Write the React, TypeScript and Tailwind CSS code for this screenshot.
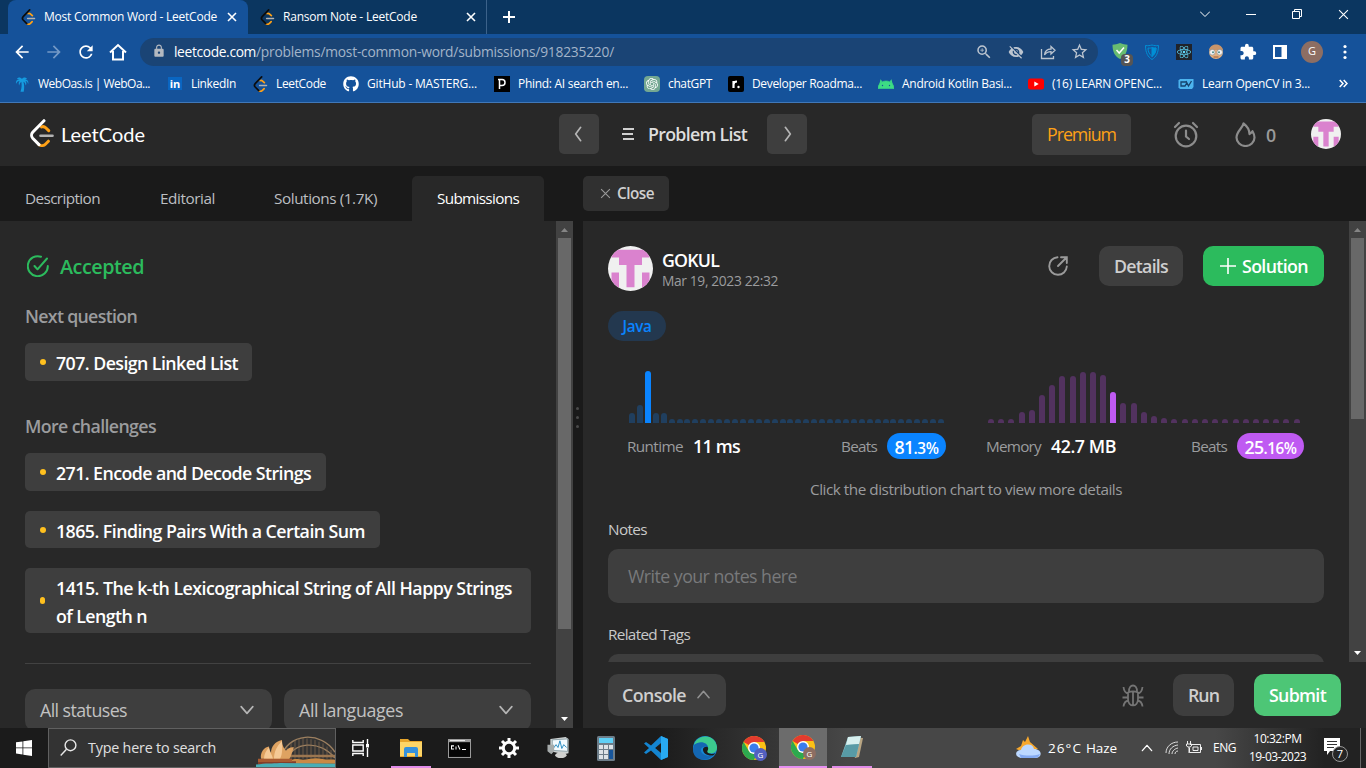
import { useLayoutEffect, useRef, useState } from "react";
import type { ReactNode } from "react";
import { FaGithub, FaReact } from "react-icons/fa";
import { SiOpenai } from "react-icons/si";
import { MdExtension, MdVisibilityOff, MdZoomIn, MdLock, MdArrowBack, MdArrowForward, MdRefresh, MdStarBorder } from "react-icons/md";

/* Text that spaces its letters to fill a given width. */
function Fit({ w, c = "", children }: { w: number; c?: string; children: string }) {
  const ref = useRef<HTMLSpanElement>(null);
  const [spacing, setSpacing] = useState(0);
  useLayoutEffect(() => {
    const el = ref.current;
    if (el) setSpacing((w - el.getBoundingClientRect().width) / children.length);
  }, [w, children]);
  return (
    <span className={`block shrink-0 whitespace-nowrap ${c}`} style={{ width: w }}>
      <span ref={ref} className="inline-block" style={{ letterSpacing: spacing }}>{children}</span>
    </span>
  );
}

function LeetLogo({ dark = false, c }: { dark?: boolean; c: string }) {
  return (
    <svg className={c} viewBox="0 0 24 28" fill="none" strokeLinecap="round" strokeWidth="3">
      <path d="M9 25.6c2 1.500 4.800 1.200 6.400-.4l3-3M11.500 8c1.800-.8 3.200-.2 4.200.8l3 2.900" stroke="#ffa116" />
      <path d="M10.500 16.700h12" stroke="#b3b3b3" strokeWidth="2.600" />
      <path d="M14 1.700 2.700 13.300c-1.500 1.700-1.500 4.400 0 6L9 25.600" stroke={dark ? "#0c0c0c" : "#fff"} />
    </svg>
  );
}

function Avatar({ c }: { c: string }) {
  return (
    <svg className={`rounded-full shrink-0 ${c}`} viewBox="0 0 45 45">
      <rect width="45" height="45" fill="#f0f0f0" />
      <path d="M3.500 3.800h38v7.700H34v7.500h-7.500v22.300h-8V19H11v-7.500H3.500zM3.500 26.500H11v15H3.500zM34 26.500h7.500v15H34z" fill="#da82ce" />
    </svg>
  );
}

function Chevron({ dir, c }: { dir: "left" | "right" | "up" | "down"; c: string }) {
  const d = { left: "M14 4 8 12l6 8", right: "M10 4l6 8-6 8", up: "M5 16l7-8 7 8", down: "M5 8l7 8 7-8" }[dir];
  return <svg className={`shrink-0 ${c}`} viewBox="0 0 24 24" fill="none" stroke="currentColor" strokeWidth="2" strokeLinecap="round" strokeLinejoin="round"><path d={d} /></svg>;
}

const Cross = ({ c }: { c: string }) => (
  <svg className={`shrink-0 ${c}`} viewBox="0 0 10 10" stroke="currentColor" fill="none"><path d="M1 1l8 8M9 1 1 9" /></svg>
);

function BrowserTabs() {
  return (
    <div className="flex h-[34px] bg-[#0b3660] pl-2">
      <div className="flex w-[240px] items-center rounded-t-lg bg-[#15529a] pl-3 text-[12px] text-white">
        <LeetLogo dark c="ml-px h-4 w-[15px] shrink-0" />
        <Fit w={173} c="ml-2">Most Common Word - LeetCode</Fit>
        <Cross c="ml-[10px] h-[10px] w-[10px] stroke-[1.600]" />
      </div>
      <div className="flex w-[239px] items-center border-r border-[#3c628a] pl-[11px] text-[12px] text-white">
        <LeetLogo dark c="ml-px h-4 w-[15px] shrink-0" />
        <Fit w={134} c="ml-2">Ransom Note - LeetCode</Fit>
        <Cross c="ml-[49px] h-[10px] w-[10px] stroke-[1.600]" />
      </div>
      <svg className="ml-[15px] mt-[10px] h-[14px] w-[14px]" viewBox="0 0 14 14" stroke="#fff" strokeWidth="2"><path d="M1 7h12M7 1v12" /></svg>
      <div className="ml-auto flex h-7 items-center gap-9 pr-[17px] text-white">
        <svg className="h-[10px] w-[10px]" viewBox="0 0 10 10" fill="none" stroke="currentColor"><path d="M0 2.500l5 5 5-5" /></svg>
        <svg className="h-[10px] w-[10px]" viewBox="0 0 10 10" fill="none" stroke="currentColor"><path d="M0 5.500h10" /></svg>
        <svg className="h-[10px] w-[10px]" viewBox="0 0 10 10" fill="none" stroke="currentColor"><path d="M.5 2.500h7v7h-7zM2.500 2.500v-2h7v7h-2" /></svg>
        <Cross c="h-[11px] w-[11px]" />
      </div>
    </div>
  );
}

function Toolbar() {
  return (
    <div className="flex h-[35px] items-center bg-[#15529a] text-white">
      <MdArrowBack className="ml-3 h-5 w-5" />
      <MdArrowForward className="ml-3 h-5 w-5 text-[#7499c6]" />
      <MdRefresh className="ml-3 h-5 w-5" />
      <svg className="ml-3 h-5 w-5" viewBox="0 0 20 20" fill="none" stroke="currentColor" strokeWidth="2"><path d="M2 10.500 10 3l8 7.500M5 9v8.500h10V9" /></svg>
      <div className="ml-3 flex h-7 w-[958px] items-center rounded-full bg-[#1a4475] pl-3 text-[13.800px]">
        <MdLock className="h-[14px] w-[14px] -translate-y-px text-[#b4b9c0]" />
        <Fit w={82} c="ml-2 pt-px">leetcode.com</Fit>
        <Fit w={358} c="pt-px text-[#a3b4c9]">/problems/most-common-word/submissions/918235220/</Fit>
        <MdZoomIn className="ml-[361px] h-[18px] w-[18px] text-[#bcc5d0]" />
        <MdVisibilityOff className="ml-[15px] h-4 w-4 text-[#bcc5d0]" />
        <svg className="ml-4 h-4 w-4 text-[#bcc5d0]" viewBox="0 0 16 16" fill="none" stroke="currentColor" strokeWidth="1.300"><path d="M1.500 5v9.500h12V12M4.500 11c.5-4 3-6 6.500-6V2.500L15 6.300 11 10V7.700c-3 0-5 1-6.500 3.300z" /></svg>
        <MdStarBorder className="ml-[14px] h-[19px] w-[19px] text-[#bcc5d0]" />
      </div>
      <div className="relative ml-[14px] h-[18px] w-[18px]">
        <svg className="h-4 w-4" viewBox="0 0 16 16"><path d="M8 0c3 1.200 5 1.500 7.500 1.700C15.500 9 13 13.500 8 16 3 13.500.5 9 .5 1.700 3 1.500 5 1.200 8 0z" fill="#68bc71" /><path d="M4.500 7l2.700 3L12 4.500" fill="none" stroke="#fff" strokeWidth="1.500" /></svg>
        <span className="absolute left-[9px] top-[11px] flex h-[12px] w-[12px] items-center justify-center rounded-sm bg-[#555] text-[10px] font-bold">3</span>
      </div>
      <svg className="ml-[14px] h-4 w-4" viewBox="0 0 16 16" fill="none" stroke="#008fd6"><path d="M1.500 1.500C4 2 6 1.500 8 1c2 .5 4 1 6.500.5C14.500 9 12 13 8 15.500 4 13 1.500 9 1.500 1.500z" /><path d="M4 4c2 .3 3 0 4-.4 1 .4 2 .7 4 .4 0 4-1.500 6.500-4 8.500-2.500-2-4-4.500-4-8.500z" /><path d="M8 3.600v8.900c2.500-2 4-4.500 4-8.500-2 .3-3 0-4-.4z" fill="#008fd6" /></svg>
      <span className="ml-4 flex h-4 w-4 items-center justify-center bg-[#20232a]"><FaReact className="h-[14px] w-[14px] text-[#61dafb]" /></span>
      <svg className="ml-4 h-4 w-4" viewBox="0 0 16 16"><circle cx="8" cy="8" r="7" fill="#e3b07f" /><path d="M1 6C2 2 5 .5 8 .500S14 2 15 6z" fill="#c8956b" /><circle cx="4.300" cy="8.200" r="2.800" fill="#f2f2f2" stroke="#888" strokeWidth=".6" /><circle cx="11.700" cy="8.200" r="2.800" fill="#f2f2f2" stroke="#888" strokeWidth=".6" /><circle cx="5" cy="8.200" r="1" fill="#4a8e8b" /><circle cx="11" cy="8.200" r="1" fill="#4a8e8b" /><path d="M5.500 13h5" stroke="#9c5c3c" /></svg>
      <MdExtension className="ml-[15px] h-[18px] w-[18px]" />
      <svg className="ml-[16px] h-[14px] w-[14px]" viewBox="0 0 14 14"><path d="M0 0h14v14H0zM2 2v10h6.500V2z" fill="#fff" fillRule="evenodd" /></svg>
      <span className="ml-[14px] flex h-[22px] w-[22px] items-center justify-center rounded-full bg-[#8d6e63] text-[11px]">G</span>
      <svg className="ml-5 h-4 w-1" viewBox="0 0 4 16" fill="#fff"><circle cx="2" cy="2.500" r="1.600" /><circle cx="2" cy="8" r="1.600" /><circle cx="2" cy="13.500" r="1.600" /></svg>
    </div>
  );
}

function Bookmark({ cell, w, icon, children }: { cell: string; w: number; icon: ReactNode; children: string }) {
  return (
    <div className={`flex shrink-0 items-center gap-2 ${cell}`}>
      <span className="flex h-4 w-4 shrink-0 items-center justify-center">{icon}</span>
      <Fit w={w}>{children}</Fit>
    </div>
  );
}

function Bookmarks() {
  return (
    <div className="flex h-[34px] items-center border-b border-[#4178b8] bg-[#15529a] pb-1 pl-[14px] text-[12px] text-white">
      <Bookmark cell="w-[153px]" w={112} icon={<svg className="h-4 w-4" viewBox="0 0 16 16"><path d="M8 3c-1.500-2-4-2-5 0 1-.3 2 0 2.500.5C3 3 1.500 5 2 8c.8-2 2-3 3.500-3-1 1.500-1 3-.2 4.500.2-2 1-3 2-3.800.6 3 .5 6-.8 10h3.200c.8-4 .6-7-.3-10 1.300.6 2 1.800 2.300 3.800 1-1.500.8-3-.2-4.500 1.500 0 2 1 2.700 3C15 5 13 3.500 11 3.600c.5-.6 1.300-.8 2-.6-1-2-4-2-5 0z" fill="#159be0" /></svg>}>WebOas.is | WebOa...</Bookmark>
      <Bookmark cell="w-[85px]" w={45} icon={<span className="flex h-[13px] w-[14px] items-center justify-center bg-[#0a66c2] text-[11px] font-bold leading-none">in</span>}>LinkedIn</Bookmark>
      <Bookmark cell="w-[91px]" w={50} icon={<LeetLogo dark c="h-4 w-[15px]" />}>LeetCode</Bookmark>
      <Bookmark cell="w-[151px]" w={110} icon={<FaGithub className="h-4 w-4" />}>GitHub - MASTERG...</Bookmark>
      <Bookmark cell="w-[150px]" w={110} icon={<span className="flex h-4 w-4 items-center justify-center bg-black"><svg className="h-3 w-2" viewBox="0 0 8 12" fill="none" stroke="#fff" strokeWidth="1.500"><path d="M0 1.500h4a2.800 2.800 0 0 1 0 6H1.500V1.500V11" /></svg></span>}>Phind: AI search en...</Bookmark>
      <Bookmark cell="w-[84px]" w={44} icon={<span className="flex h-4 w-4 items-center justify-center rounded-sm bg-[#74a892]"><SiOpenai className="h-3 w-3" /></span>}>chatGPT</Bookmark>
      <Bookmark cell="w-[150px]" w={110} icon={<span className="flex h-4 w-4 items-center justify-center rounded-xs bg-black"><svg className="h-[10px] w-[10px]" viewBox="0 0 10 10"><path d="M2.500 9V2M2.500 5.500C2.500 3.500 4 2.500 6 2.500" stroke="#fff" strokeWidth="2.200" fill="none" /><circle cx="7.500" cy="8" r="1.200" fill="#fff" /></svg></span>}>Developer Roadma...</Bookmark>
      <Bookmark cell="w-[150px]" w={110} icon={<svg className="h-4 w-4" viewBox="0 0 16 16"><path d="M0 12.500C.3 9.500 1.800 7.200 4 5.800L2.600 3.600M16 12.500C15.700 9.500 14.200 7.200 12 5.800l1.400-2.200M0 12.500C.3 8 4 5 8 5s7.700 3 8 7.500z" fill="#3ddc84" stroke="#3ddc84" strokeWidth=".6" /><circle cx="4.500" cy="9.500" r=".7" fill="#15529a" /><circle cx="11.500" cy="9.500" r=".7" fill="#15529a" /></svg>}>Android Kotlin Basi...</Bookmark>
      <Bookmark cell="w-[150px]" w={110} icon={<svg className="h-4 w-4" viewBox="0 0 16 16"><rect y="2.500" width="16" height="11" rx="2.500" fill="red" /><path d="M6.300 5.500v5L10.700 8z" fill="#fff" /></svg>}>(16) LEARN OPENC...</Bookmark>
      <Bookmark cell="w-[161px]" w={108} icon={<svg className="h-4 w-4" viewBox="0 0 16 16"><path d="M2 3h13.500v8L14 13H2L.500 11.500v-7z" fill="#4db4ee" /><path d="M8 6H3v4h4l2-3.500M8 5l2.500 5L13.500 5" fill="none" stroke="#15436f" strokeWidth="1.300" /></svg>}>Learn OpenCV in 3...</Bookmark>
      <svg className="h-[9px] w-[9px]" viewBox="0 0 9 9" fill="none" stroke="#fff" strokeWidth="1.500"><path d="M.7 1l3.300 3.500L.7 8M4.700 1 8 4.500 4.700 8" /></svg>
    </div>
  );
}

function SiteHeader() {
  return (
    <header className="flex h-[63px] items-center bg-[#282828] pb-px text-[#e0e0e0]">
      <LeetLogo c="ml-[30px] h-7 w-6 -translate-y-px" />
      <Fit w={84} c="mb-px ml-[7px] font-['Lato'] text-[20px] text-white">LeetCode</Fit>
      <span className="ml-[414px] flex h-10 w-10 items-center justify-center rounded-[5px] bg-[#3e3e3e]"><Chevron dir="left" c="h-5 w-5 text-[#b5b5b5]" /></span>
      <svg className="ml-[23px] h-3 w-3" viewBox="0 0 12 12" stroke="#d0d0d0" strokeWidth="2"><path d="M1 1h11M0 6h11M1 11h11" /></svg>
      <Fit w={99} c="ml-[14px] pt-px text-[17.800px] font-semibold text-[#dedede]">Problem List</Fit>
      <span className="ml-[20px] flex h-10 w-10 items-center justify-center rounded-[5px] bg-[#3e3e3e]"><Chevron dir="right" c="h-5 w-5 text-[#b5b5b5]" /></span>
      <span className="ml-[225px] flex h-[41px] w-[99px] items-center justify-center rounded-[5px] bg-[#3e3e3e]"><Fit w={69} c="pt-px text-[17.800px] text-[#ffa116]">Premium</Fit></span>
      <svg className="ml-[42px] h-[27px] w-[26px]" viewBox="0 0 26 27" fill="none" stroke="#8c8c8c" strokeWidth="2.200" strokeLinecap="round"><circle cx="13" cy="15" r="10.300" /><path d="M2 6l4-4M24 6l-4-4M13 9.500v6l3 2.500" /></svg>
      <svg className="ml-[36px] h-[25px] w-[21px]" viewBox="0 0 21 25" fill="none" stroke="#8c8c8c" strokeWidth="2.200" strokeLinejoin="round"><path d="M8.500 1.300C8 6 1.500 9 1.500 15.500a9 8.500 0 0 0 18 0c0-2.500-.8-4.300-2-6.300-.7 1.200-1.500 2-3 2.800C14.500 7.500 12 4 8.500 1.300z" /></svg>
      <Fit w={10} c="ml-[10px] mt-[2px] text-[17.800px] font-semibold text-[#9a9a9a]">0</Fit>
      <Avatar c="ml-[35px] h-[30px] w-[30px]" />
    </header>
  );
}

function TabRow() {
  return (
    <div className="flex h-[55px] items-start bg-[#1a1a1a] pt-[10px] text-[15.300px]">
      <nav className="flex h-[45px] w-[583px] items-center text-[#bdbfc2]">
        <Fit w={75} c="ml-[25px]">Description</Fit>
        <Fit w={55} c="ml-[60px]">Editorial</Fit>
        <Fit w={103} c="ml-[59px]">Solutions (1.7K)</Fit>
        <span className="ml-[35px] flex h-[45px] w-[132px] items-center justify-center rounded-t-[5px] bg-[#282828] text-white"><Fit w={82}>Submissions</Fit></span>
      </nav>
      <span className="flex h-[35px] w-[86px] items-center rounded-[5px] bg-[#303030] pl-[17px] text-[#cfcfcf]">
        <Cross c="h-[11px] w-[11px] text-[#999]" />
        <Fit w={37} c="ml-[6px] font-semibold">Close</Fit>
      </span>
    </div>
  );
}

function Problem({ box, w, children }: { box: string; w: number; children: string }) {
  return (
    <div className={`flex items-center rounded-[5px] bg-[#3e3e3e] pl-[15px] ${box}`}>
      <span className="h-[6px] w-[6px] rounded-full bg-[#ffc01e]" />
      <Fit w={w} c="ml-[10px] pt-[2px]">{children}</Fit>
    </div>
  );
}

function Select({ w, children }: { w: number; children: string }) {
  return (
    <div className="flex h-[42px] w-[247px] items-center justify-between rounded-[10px] bg-[#3e3e3e] px-[15px] text-[#c2c2c2]">
      <Fit w={w}>{children}</Fit>
      <Chevron dir="down" c="h-5 w-5 text-[#b5b5b5]" />
    </div>
  );
}

function Scrollbar({ thumb }: { thumb: string }) {
  return (
    <div className="flex w-[17px] shrink-0 flex-col items-center bg-[#424242]">
      <svg className="h-[17px] w-[17px]" viewBox="0 0 17 17"><path d="M5 11h7L8.500 7z" fill="#858585" /></svg>
      <div className={`w-[13px] bg-[#686868] ${thumb}`} />
      <svg className="mt-auto h-[17px] w-[17px]" viewBox="0 0 17 17"><path d="M5 6h7l-3.500 4z" fill="#fff" /></svg>
    </div>
  );
}

function Submissions() {
  return (
    <section className="h-full w-[556px] overflow-hidden bg-[#282828] px-[25px] text-[17.800px] leading-[28px]">
      <div className="mt-[32px] flex h-7 items-center text-[#2cbb5d]">
        <svg className="mb-[3px] ml-[2px] h-[22px] w-[22px]" viewBox="0 0 22 22" fill="none" stroke="currentColor" strokeWidth="2" strokeLinecap="round" strokeLinejoin="round"><path d="M14 1.700A10 10 0 1 0 20.800 11M7.500 11l3 3.300L20 3.500" /></svg>
        <Fit w={84} c="ml-[11px] text-[19.800px] font-semibold">Accepted</Fit>
      </div>
      <div className="mt-[21px] font-semibold text-[#9b9c9e]"><Fit w={112}>Next question</Fit></div>
      <div className="mt-[13px] font-semibold text-white"><Problem box="h-[38px] w-[227px]" w={182}>707. Design Linked List</Problem></div>
      <div className="mt-[31px] font-semibold text-[#9b9c9e]"><Fit w={131}>More challenges</Fit></div>
      <div className="mt-[13px] flex flex-col gap-5 font-semibold text-white">
        <Problem box="h-[38px] w-[301px]" w={255}>271. Encode and Decode Strings</Problem>
        <Problem box="h-[37px] w-[355px]" w={309}>1865. Finding Pairs With a Certain Sum</Problem>
        <div className="flex h-[65px] w-[506px] items-center rounded-[5px] bg-[#3e3e3e] pl-[15px]">
          <span className="h-[7px] w-[5px] rounded-full bg-[#ffc01e]" />
          <div className="ml-[11px] pt-[2px]">
            <Fit w={456}>1415. The k-th Lexicographical String of All Happy Strings</Fit>
            <Fit w={91}>of Length n</Fit>
          </div>
        </div>
      </div>
      <div className="mt-[30px] h-px bg-[#424242]" />
      <div className="mt-[25px] flex gap-3"><Select w={87}>All statuses</Select><Select w={104}>All languages</Select></div>
    </section>
  );
}

const runtimeBars = [10, 18.5, 52, 10, 10, ...Array(35).fill(4)];
const memoryBars = [4, 4, 4, 11, 13.5, 28, 38.5, 47, 47, 51, 51, 48.5, 31, 20, 20, 11, 7, 5, ...Array(13).fill(4)];

function Bars({ data, span, active, on, off }: { data: number[]; span: string; active: number; on: string; off: string }) {
  return (
    <div className={`flex h-[52px] items-end justify-between ${span}`}>
      {data.map((h, i) => <span key={i} className={`w-[6px] rounded-t-[3px] ${i === active ? on : off}`} style={{ height: h }} />)}
    </div>
  );
}

function Result() {
  return (
    <section className="h-full w-[766px] overflow-hidden bg-[#282828] pl-[25px] pr-[25px] text-[15.300px]">
      <div className="mt-[25px] flex items-center">
        <Avatar c="h-[45px] w-[45px]" />
        <div className="ml-[9px] pt-px">
          <Fit w={57} c="mt-px text-[17.800px] font-semibold leading-[22px] text-white">GOKUL</Fit>
          <Fit w={116} c="text-[13.800px] leading-[20px] text-[#9b9c9e]">Mar 19, 2023 22:32</Fit>
        </div>
        <svg className="mb-[5px] ml-[270px] h-[20px] w-[20px]" viewBox="0 0 20 20" fill="none" stroke="#9a9a9a" strokeWidth="1.900" strokeLinecap="round"><path d="M9.500 1.200A8.800 8.800 0 1 0 18.800 10.500M10 10l8.500-8.500M13 1.200h5.800V7" /></svg>
        <span className="mb-[5px] ml-[31px] flex h-10 w-[84px] items-center justify-center rounded-[10px] bg-[#3e3e3e] text-[17.800px] font-semibold text-[#cfcfcf]"><Fit w={54}>Details</Fit></span>
        <span className="mb-[5px] ml-5 flex h-10 w-[121px] items-center rounded-[10px] bg-[#2cbb5d] pl-[17px] text-[17.800px] font-semibold text-white">
          <svg className="h-4 w-4" viewBox="0 0 16 16" stroke="#fff" strokeWidth="1.600"><path d="M0 8h16M8 0v16" /></svg>
          <Fit w={66} c="ml-[6px] pt-px">Solution</Fit>
        </span>
      </div>
      <div className="mt-5 flex h-[30px] w-[58px] items-center justify-center rounded-full bg-[#23384f] font-semibold text-[#0a84ff]"><Fit w={29}>Java</Fit></div>
      <div className="mt-[30px] flex">
        <Bars data={runtimeBars} span="ml-[21px] w-[315px]" active={2} on="bg-[#0a84ff]" off="bg-[#203f5f]" />
        <Bars data={memoryBars} span="ml-[44px] w-[312px]" active={12} on="bg-[#bf5af2]" off="bg-[#52325f]" />
      </div>
      <div className="mt-[10px] flex h-[26px] items-center text-[#9b9c9e]">
        <Fit w={56} c="ml-[19px]">Runtime</Fit>
        <Fit w={47} c="ml-[10px] text-[17.800px] font-semibold text-white">11 ms</Fit>
        <Fit w={36} c="ml-[101px]">Beats</Fit>
        <span className="ml-[10px] flex h-[26px] w-[59px] items-baseline justify-center rounded-full bg-[#0a84ff] pt-px font-semibold leading-[26px] text-white"><Fit w={19} c="text-[17.800px]">81</Fit><Fit w={25}>.3%</Fit></span>
        <Fit w={55} c="ml-10">Memory</Fit>
        <Fit w={65} c="ml-[10px] text-[17.800px] font-semibold text-white">42.7 MB</Fit>
        <Fit w={36} c="ml-[75px]">Beats</Fit>
        <span className="ml-[10px] flex h-[26px] w-[67px] items-baseline justify-center rounded-full bg-[#bf5af2] pt-px font-semibold leading-[26px] text-white"><Fit w={19} c="text-[17.800px]">25</Fit><Fit w={33}>.16%</Fit></span>
      </div>
      <div className="mt-[19px] flex h-[22px] items-center justify-center text-[#9b9c9e]"><Fit w={312}>Click the distribution chart to view more details</Fit></div>
      <Fit w={39} c="mt-[18px] leading-[22px] text-[#c9c9c9]">Notes</Fit>
      <div className="mt-[9px] flex h-[54px] items-center rounded-[10px] bg-[#3e3e3e] pl-[20px] pt-px text-[17.800px] text-[#78797b]"><Fit w={169}>Write your notes here</Fit></div>
      <Fit w={82} c="mt-[20px] leading-[22px] text-[#c9c9c9]">Related Tags</Fit>
      <div className="mt-[9px] h-[54px] rounded-[10px] bg-[#3e3e3e]" />
    </section>
  );
}

function Footer() {
  return (
    <div className="flex h-[66px] items-center bg-[#282828] pl-[25px] text-[17.800px] font-semibold text-[#cfcfcf]">
      <span className="flex h-[42px] w-[118px] items-center rounded-[10px] bg-[#3e3e3e] pl-[14px]">
        <Fit w={64}>Console</Fit><Chevron dir="up" c="mb-[2px] ml-[8px] h-[19px] w-[19px] text-[#929292]" />
      </span>
      <svg className="ml-[396px] h-[23px] w-[22px]" viewBox="0 0 22 23" fill="none" stroke="#747474" strokeWidth="1.800"><path d="M6 8.500c3-1.300 7-1.300 10 0v6.500c0 8.500-10 8.500-10 0zM7 7.500C6.500-.5 15.500-.5 15 7.500M11 8v13M6 9.500C3.500 9 2 7.500 1.500 3M16 9.500c2.500-.5 4-2 4.500-6.500M6 13.500H.5M16 13.500h5.500M6.500 16.500C3.500 17 2 18.500 1.500 22.500M15.500 16.500c3 .5 4.500 2 5 6" /></svg>
      <span className="ml-[29px] flex h-[42px] w-[61px] items-center justify-center rounded-[10px] bg-[#3e3e3e]"><Fit w={31}>Run</Fit></span>
      <span className="ml-5 flex h-[42px] w-[87px] items-center justify-center rounded-[10px] bg-[#4dc676] text-white"><Fit w={57}>Submit</Fit></span>
    </div>
  );
}

function Chrome({ badge, color }: { badge: string; color: string }) {
  return (
    <span className="relative block h-6 w-6">
      <svg className="h-6 w-6" viewBox="0 0 24 24">
        <circle cx="12" cy="12" r="12" fill="#fbc116" />
        <path d="M12 12 1.600 6A12 12 0 0 1 22.400 6H12z" fill="#e33b2e" />
        <path d="M12 24A12 12 0 0 1 1.600 6l5.200 9L12 18l3-1z" fill="#2da94f" />
        <circle cx="12" cy="12" r="6" fill="#fff" /><circle cx="12" cy="12" r="4.600" fill="#3a7cec" />
      </svg>
      <span className={`absolute left-3 top-3 flex h-[13px] w-[13px] items-center justify-center rounded-full text-[8px] text-white ${color}`}>{badge}</span>
    </span>
  );
}

function Sydney() {
  return (
    <svg className="ml-auto h-[31px] w-[79px] shrink-0 self-end" viewBox="0 0 79 38" preserveAspectRatio="none" fill="none">
      <path d="M24 29C31-6 66-6 79 20M30 30C37 7 63 4 79 27" stroke="#9d8060" strokeWidth="1.500" />
      <path d="M31 14v14M35 8v20M39 5v23M43 3v25M47 2v26M51 3v25M55 4v24M59 5v23M63 7v21M67 9v19M71 13v15M75 17v12" stroke="#846b50" strokeWidth=".8" />
      <path d="M25 23h54v3H25z" fill="#9b7650" />
      <path d="M33 31c6-5 10-2 14-2s12-3 18-1 9 0 14 1v5H33z" fill="#c98a45" />
      <path d="M2 31h38v3l-38 1z" fill="#833f2b" />
      <path d="M5 28C4 20 8 14 13 13c0 4 1 6 2 8 0-8 4-14 11-16 0 7 2 10 4 13 2-3 5-5 8-4-2 5-2 9-5 15z" fill="#dea261" />
      <path d="M8 28c0-6 2-10 5-14 1 6 3 9 4 14M18 28c0-9 3-16 8-22 0 8 1 15-2 22" fill="#f5c995" />
      <path d="M2 28h34v4H2z" fill="#a85b31" />
      <path d="M0 35c10-2 16-1 24-2l55 1v4H0z" fill="#48aeb5" />
    </svg>
  );
}

function Taskbar() {
  return (
    <footer className="flex h-10 items-center bg-[linear-gradient(90deg,#1b1b1b_48%,#474747_62%,#474747_89%,#222_97%)] text-white">
      <svg className="ml-4 h-4 w-4" viewBox="0 0 16 16" fill="#fff"><path d="M0 2.300 6.500 1.400v6.100H0zM7.300 1.300 16 0v7.500H7.300zM0 8.300h6.500v6.200L0 13.600zM7.300 8.300H16V16l-8.700-1.300z" /></svg>
      <div className="ml-4 flex h-10 w-[288px] items-center border border-[#606060] bg-[#333] pl-[11px] text-[14.300px] text-[#e0e0e0]">
        <svg className="h-[18px] w-[17px]" viewBox="0 0 17 18" fill="none" stroke="#e8e8e8" strokeWidth="1.400"><circle cx="10.500" cy="6.300" r="5.400" /><path d="M6.500 10.300.7 16.500" /></svg>
        <Fit w={128} c="ml-[11px]">Type here to search</Fit>
        <Sydney />
      </div>
      <svg className="ml-4 h-[18px] w-[18px]" viewBox="0 0 18 18" fill="none" stroke="#fff" strokeWidth="1.400"><path d="M.8 1v2.500h10.400V1M.8 17v-2.500h10.400V17M.8 6h10.400v6H.8zM15.500 0v5M15.500 9v9" /><path d="M14 5h3v3.500h-3z" fill="#fff" stroke="none" /></svg>
      <span className="ml-[21px] flex h-10 w-10 items-center justify-center border-b-2 border-[#e08be8] pt-[2px]">
        <svg className="h-5 w-[22px]" viewBox="0 0 22 20"><path d="M0 1h8l2 2h12v16H0z" fill="#e7a52b" /><path d="M0 4h22v14H0z" fill="#fdd567" /><path d="M4 19v-8q0-2 2-2h10q2 0 2 2v8h-3v-4H7v4z" fill="#3591dc" /></svg>
      </span>
      <svg className="ml-[17px] h-[19px] w-[23px]" viewBox="0 0 23 18" preserveAspectRatio="none"><path d="M0 0h23v18H0z" fill="#9a9a9a" /><path d="M1 3h21v14H1z" fill="#050505" /><path d="M2 1.500h15" stroke="#eee" /><path d="M6 6.500H3.500v3H6M8 7v3M10 6l2 4M14 10h4" stroke="#fff" fill="none" /></svg>
      <svg className="ml-[28px] h-[20px] w-[20px]" viewBox="0 0 20 20" fill="none" stroke="#fff"><circle cx="10" cy="10" r="5.700" strokeWidth="3" /><path d="M10 0v4M10 16v4M0 10h4M16 10h4M3 3l2.700 2.700M14.300 14.300 17 17M17 3l-2.700 2.700M5.700 14.300 3 17" strokeWidth="3" /></svg>
      <svg className="ml-[27px] h-[22px] w-[24px]" viewBox="0 0 24 23"><path d="M4 2 20 0l3 2v15l-5 1-14-3z" fill="#d0d4d4" /><path d="m6 3 16-1v13L6 14z" fill="#f3fafe" stroke="#8fa2a8" /><path d="m7 12 3-4 2 3 2-7 2 8 2-4 3 3" fill="none" stroke="#278ac0" /><path d="M1 8h7v7l-3 3-4-3z" fill="#a6abab" /><ellipse cx="15" cy="19" rx="6" ry="3" fill="#d0d0ce" /></svg>
      <svg className="ml-[27px] h-[25px] w-[18px]" viewBox="0 0 18 25"><rect width="18" height="25" rx="1.500" fill="#6d7d89" /><path d="M2 2h14v5H2z" fill="#5fd0f6" /><path d="M2 9h4v4H2zM7 9h4v4H7zM12 9h4v4h-4zM2 14h4v4H2zM7 14h4v4H7zM2 19h4v4H2zM7 19h4v4H7z" fill="#dce2e6" /><path d="M12 14h4v9h-4z" fill="#17569c" /></svg>
      <svg className="ml-[29px] h-6 w-6" viewBox="0 0 24 24"><path d="m17 0 7 3v18l-7 3L7 14.500 2 18l-2-1.500L5 12 0 7.500 2 6l5 3.500z" fill="#1485d1" /><path d="M17 0l7 3v18l-7 3zM17 7v10l-6-5z" fillRule="evenodd" fill="#28aaf2" /><path d="M17 7v10l-6-5z" fill="#1b1b1b" /></svg>
      <svg className="ml-[25px] h-6 w-6" viewBox="0 0 24 24"><circle cx="12" cy="12" r="12" fill="#1687d3" /><path d="M1 9C4-2 22-3 24 11c.3 5-4 7-8 6-4-.8-2-2-1.500-4C15 8 6 5 1 9z" fill="#3cca8f" /><path d="M1 9C8 3 16 8 15 12c-1.500-2-6-1.500-7 1-1 4 4 8 12 6.500C12 28-4 23 1 9z" fill="#1467b3" /><path d="M15 11.500c1 3-3 4.500 1.500 6 2.500.8 4.500.3 5.500-.5-.5 1.500-1 2-2 2.500C14 20 9.500 17 10 13c.5-2 4-3 5-1.500z" fill="#1b1b1b" /></svg>
      <span className="ml-[25px]"><Chrome badge="G" color="bg-[#5360c0]" /></span>
      <span className="ml-[13px] flex h-10 w-12 items-center justify-center border-b-2 border-[#e58ff0] bg-[#6c6c6c]"><Chrome badge="G" color="bg-[#8d6e63]" /></span>
      <span className="ml-[5px] flex h-10 w-10 items-center justify-center border-b-2 border-[#e08be8]">
        <svg className="h-[22px] w-[23px]" viewBox="0 0 23 22"><path d="m8 1 14 1-4 19-4 1z" fill="#b8a583" /><path d="M7 1 20 0l-5 21H0z" fill="#87bdc5" /><path d="M7 1 20 0l-2 8-13 1z" fill="#d7f0ef" /><path d="M5 9l13-1-3 13H0z" fill="#589ba6" /></svg>
      </span>
      <svg className="ml-[144px] h-6 w-[25px]" viewBox="0 0 25 24"><path d="M12 0l2 6 8 7-14 3-8-3 5-3 2-6 2 2z" fill="#f7a82e" /><path d="M5 22c-7-1-6-8 0-8C7 7 17 7 18 13c8 0 9 8 2 9z" fill="#bcd8ff" /><path d="M3 18c6 2 15 2 21 0-1 3-3 4-6 4H5z" fill="#84aaf1" /></svg>
      <Fit w={34} c="ml-[7px] text-[13.500px]">26°C</Fit>
      <Fit w={31} c="ml-[4px] text-[13.500px]">Haze</Fit>
      <Chevron dir="up" c="ml-[22px] h-4 w-4" />
      <svg className="ml-[10px] h-[14px] w-[14px]" viewBox="0 0 14 14" fill="none" stroke="#ddd"><path d="M1 12C1 6 6 1 13 1M4 13c0-5 4-8.500 9-9M7 13c0-3 3-5.500 6-6M10 13c0-1.500 1-3 3-3" /></svg>
      <svg className="ml-[7px] h-[14px] w-[16px]" viewBox="0 0 16 14" fill="none" stroke="#eee"><path d="M4 3.500h10.500v8H3.500V7M15.500 6v3M7 6h5v3.500H7zM1.500 0v3M4.500 0v3M.5 3h5v2L4 6H2L.500 5zM3 6v6" /></svg>
      <Fit w={23} c="ml-[11px] text-[12px]">ENG</Fit>
      <div className="ml-[13px] flex w-[57px] flex-col items-center pb-px text-[12px] leading-[18px]"><Fit w={48}>10:32:PM</Fit><Fit w={57}>19-03-2023</Fit></div>
      <span className="relative ml-[18px] block h-6 w-[26px]">
        <svg className="mt-[2px] h-[17px] w-4" viewBox="0 0 16 17"><path d="M0 0h16v13H6l-3 4v-4H0z" fill="#fff" /><path d="M3 3.500h10M3 6.500h10M3 9.500h7" stroke="#333" /></svg>
        <span className="absolute left-[8px] top-[10px] flex h-4 w-4 items-center justify-center rounded-full border border-[#999] bg-[#252525] text-[11px]">7</span>
      </span>
      <span className="ml-[10px] h-10 w-px bg-[#666]" />
    </footer>
  );
}

export default function App() {
  return (
    <div className="flex h-[768px] w-[1366px] flex-col overflow-hidden bg-[#1a1a1a] font-['Open_Sans','Noto_Sans',sans-serif]">
      <BrowserTabs />
      <Toolbar />
      <Bookmarks />
      <SiteHeader />
      <TabRow />
      <main className="flex h-[507px]">
        <Submissions />
        <Scrollbar thumb="h-[391px]" />
        <div className="flex w-[10px] flex-col items-center justify-center gap-[6px] pb-[115px] pr-[2px]">
          <span className="h-[3px] w-[3px] rounded-full bg-[#4a4a4a]" /><span className="h-[3px] w-[3px] rounded-full bg-[#4a4a4a]" /><span className="h-[3px] w-[3px] rounded-full bg-[#4a4a4a]" />
        </div>
        <div className="flex w-[783px] flex-col">
          <div className="flex h-[441px]"><Result /><Scrollbar thumb="h-[181px]" /></div>
          <Footer />
        </div>
      </main>
      <Taskbar />
    </div>
  );
}
